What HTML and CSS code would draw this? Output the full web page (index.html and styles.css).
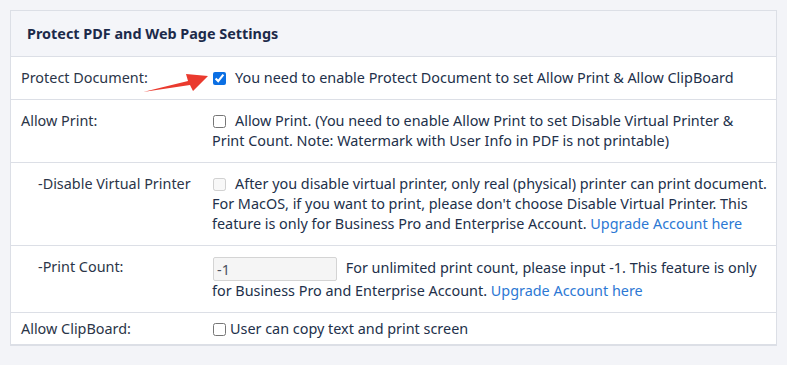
FILE: index.html
```html
<!DOCTYPE html>
<html lang="en">
<head>
    <meta charset="UTF-8">
    <title>Protect PDF and Web Page Settings</title>
    <link rel="stylesheet" href="styles.css">
</head>
<body>
    <div class="panel">
        <div class="panel-head">Protect PDF and Web Page Settings</div>

        <div class="row">
            <div class="label">Protect Document:</div>
            <div class="value">
                <label class="check"><input type="checkbox" checked><span>You need to enable Protect Document to set Allow Print &amp; Allow ClipBoard</span></label>
            </div>
            <!-- red annotation arrow -->
            <svg class="arrow" width="70" height="26" viewBox="0 0 70 26">
                <polygon points="0,21 45,10 43,3 65,5 50,20 47,14" fill="#ea3a2e"/>
            </svg>
        </div>

        <div class="row">
            <div class="label">Allow Print:</div>
            <div class="value">
                <label class="check"><input type="checkbox"><span>Allow Print. (You need to enable Allow Print to set Disable Virtual Printer &amp; Print Count. Note: Watermark with User Info in PDF is not printable)</span></label>
            </div>
        </div>

        <div class="row">
            <div class="label sub">-Disable Virtual Printer</div>
            <div class="value">
                <label class="check"><input type="checkbox" disabled><span>After you disable virtual printer, only real (physical) printer can print document. For MacOS, if you want to print, please don't choose Disable Virtual Printer. This feature is only for Business Pro and Enterprise Account. <a href="#">Upgrade Account here</a></span></label>
            </div>
        </div>

        <div class="row">
            <div class="label sub">-Print Count:</div>
            <div class="value">
                <input class="count" type="text" value="-1">
                For unlimited print count, please input -1. This feature is only for Business Pro and Enterprise Account. <a href="#">Upgrade Account here</a>
            </div>
        </div>

        <div class="row last">
            <div class="label">Allow ClipBoard:</div>
            <div class="value">
                <label class="check tight"><input type="checkbox"><span>User can copy text and print screen</span></label>
            </div>
        </div>
    </div>
</body>
</html>
```

FILE: styles.css
```css
* {
    box-sizing: border-box;
}

body {
    margin: 10px;
    background: #f3f4f8;
    font-family: "Noto Sans", "Open Sans", sans-serif;
    font-size: 14.4px;
    color: #22304a;
}

.panel {
    background: #fff;
    border: 1px solid #dcdfe6;
    border-bottom-width: 2px;
}

.panel-head {
    background: #f4f5f9;
    height: 46px;
    padding: 0 16px;
    line-height: 45px;
    font-weight: bold;
    color: #1c2a4a;
    border-bottom: 1px solid #dcdfe6;
}

.row {
    display: grid;
    grid-template-columns: 201px 1fr;
    padding: 11px 9px 11px 0;
    line-height: 20px;
    border-bottom: 1px solid #dcdfe6;
    position: relative;
}

.row.last {
    border-bottom: none;
    padding: 6px 9px 5px 0;
}

.label {
    padding-left: 10px;
    color: #2b3548;
}

.label.sub {
    padding-left: 27px;
}

.check input {
    margin: 0 9px 0 1px;
    width: 13px;
    height: 13px;
    vertical-align: -2px;
    accent-color: #0b6fe3;
}

.check.tight input {
    margin-right: 4px;
}

.count {
    width: 124px;
    height: 24px;
    margin: 0 5px 0 1px;
    padding: 0 3px;
    border: 1px solid #d4d4d4;
    border-radius: 2px;
    background: #f5f5f5;
    font: inherit;
    color: #4a5060;
    vertical-align: middle;
}

a {
    color: #2c78d4;
    text-decoration: none;
}

.arrow {
    position: absolute;
    left: 132px;
    top: 14px;
}
```
